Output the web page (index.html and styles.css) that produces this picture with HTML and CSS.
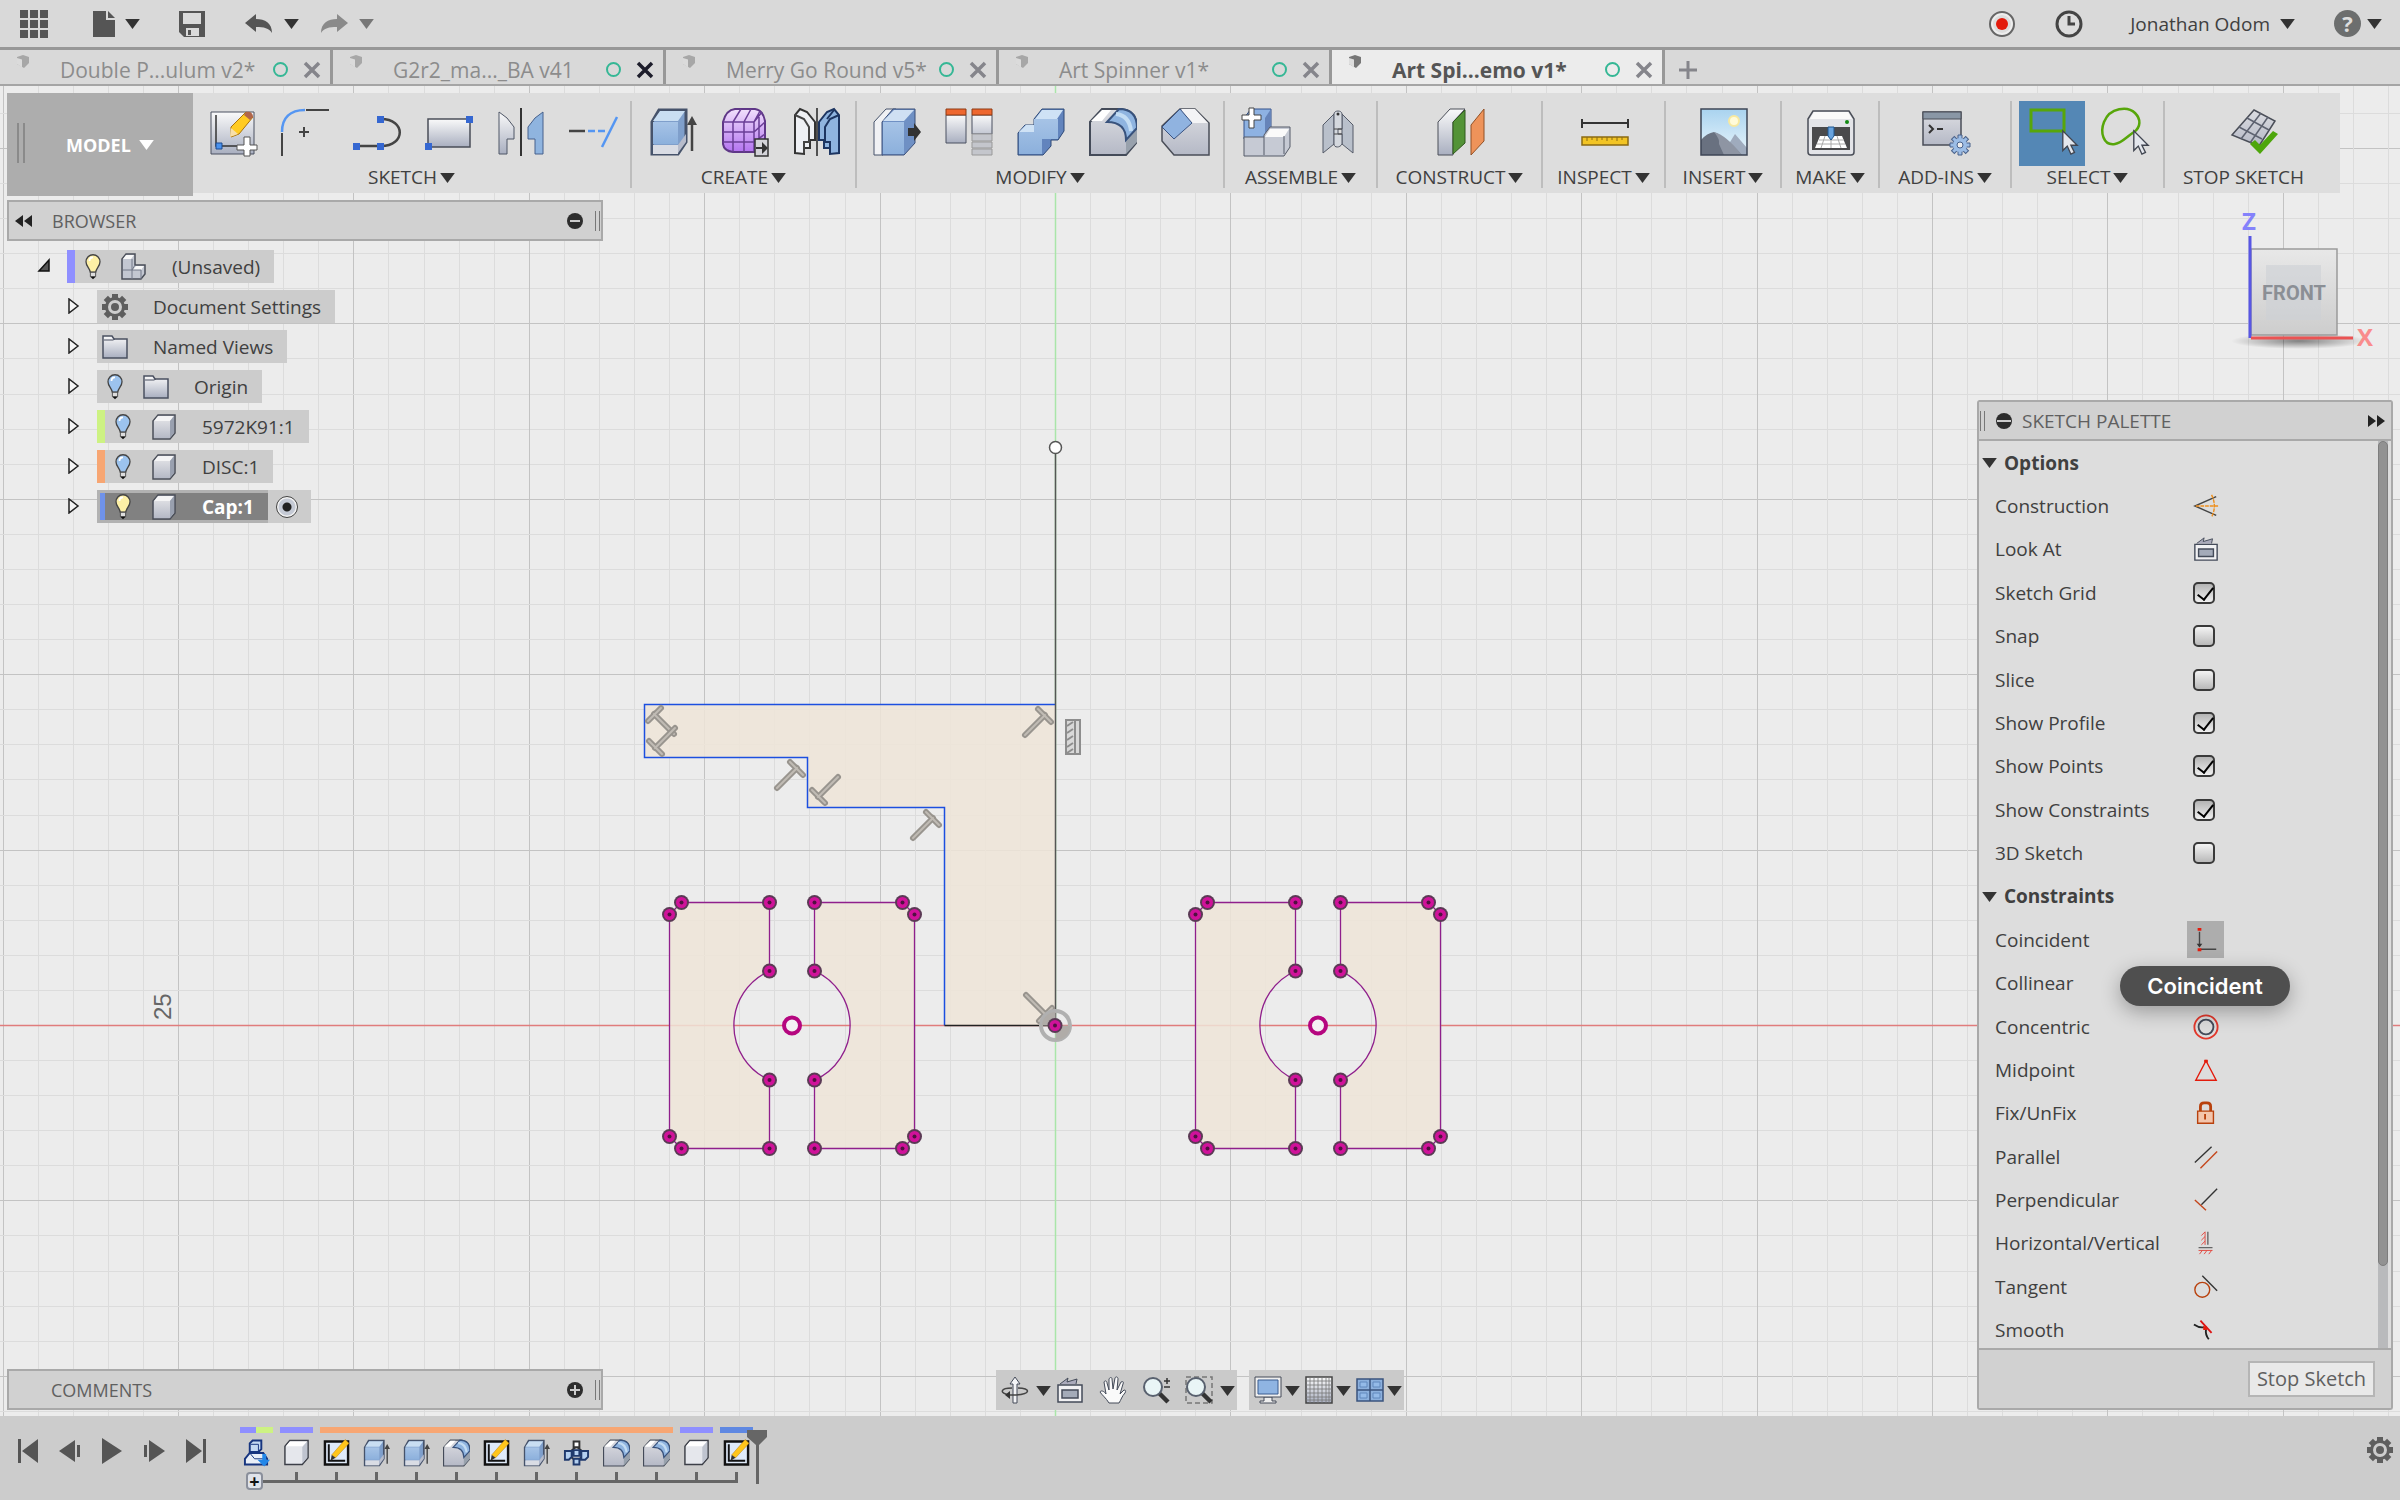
FILE: index.html
```html
<!DOCTYPE html>
<html lang="en">
  <head>
    <meta charset="utf-8">
    <title>Art Spinner Demo v1*</title>
    <link rel="stylesheet" href="styles.css">
  </head>
  <body>
    <!-- shared gradients and icons -->
    <svg class="defs" aria-hidden="true">
      <defs>
        <linearGradient id="steel" x1="0" y1="0" x2="0" y2="1"><stop offset="0" stop-color="#fafafa"/><stop offset="1" stop-color="#a9afc0"/></linearGradient>
        <linearGradient id="gray" x1="0" y1="0" x2="0" y2="1"><stop offset="0" stop-color="#dcdde2"/><stop offset="1" stop-color="#b5b9c6"/></linearGradient>
        <linearGradient id="blue" x1="0" y1="0" x2="0" y2="1"><stop offset="0" stop-color="#a6c3e6"/><stop offset="1" stop-color="#8cb0dc"/></linearGradient>
        <linearGradient id="purple" x1="0" y1="0" x2="0" y2="1"><stop offset="0" stop-color="#f1e0fb"/><stop offset="1" stop-color="#b373f0"/></linearGradient>
        <linearGradient id="sky" x1="0" y1="0" x2="0" y2="1"><stop offset="0" stop-color="#a9d3ef"/><stop offset="1" stop-color="#eaf6fc"/></linearGradient>
        <linearGradient id="cubeface" x1="0" y1="0" x2="0" y2="1"><stop offset="0" stop-color="#e8e8e8"/><stop offset="1" stop-color="#cdcdcd"/></linearGradient>
        <radialGradient id="shade"><stop offset="0" stop-color="#000" stop-opacity=".45"/><stop offset="1" stop-color="#000" stop-opacity="0"/></radialGradient>
        <symbol id="i-down" viewBox="0 0 16 12"><path d="M0 1h16L8 12z" fill="currentColor"/></symbol>
        <symbol id="i-doc" viewBox="0 0 14 14"><path d="M1 2l6-2 6 2v6l-5 5-7-4z" fill="#777"/><path d="M1 3l5 1.500v8L1 9z" fill="#ddd"/></symbol>
        <symbol id="i-x" viewBox="0 0 18 18"><path d="M2 2l14 14M16 2L2 16" stroke="currentColor" stroke-width="3.500"/></symbol>
        <symbol id="i-gear" viewBox="0 0 28 28">
          <g fill="currentColor"><circle cx="14" cy="14" r="10"/>
          <path d="M11 1h6v26h-6z"/><path d="M11 1h6v26h-6z" transform="rotate(45 14 14)"/><path d="M11 1h6v26h-6z" transform="rotate(90 14 14)"/><path d="M11 1h6v26h-6z" transform="rotate(135 14 14)"/></g>
          <circle cx="14" cy="14" r="5.500" fill="currentColor" stroke="#cdcdcd" stroke-width="3"/>
        </symbol>
        <symbol id="i-bulb" viewBox="0 0 28 32">
          <path d="M14 2c-5 0-8 4-8 8 0 5 4 7 5 12h6c1-5 5-7 5-12 0-4-3-8-8-8z" fill="currentColor" stroke="#444" stroke-width="1.500"/>
          <path d="M10 9c0-3 2-4 4-4" stroke="#fff" stroke-width="2" fill="none"/>
          <path d="M11 22h6v5h-6z" fill="#ddd" stroke="#444"/><path d="M11 27h6l-3 3z" fill="#111"/>
        </symbol>
        <symbol id="i-folder" viewBox="0 0 28 28"><path d="M2 25V3h9l2 3h13v19z" fill="url(#steel)" stroke="#4a5060" stroke-width="1.500"/><path d="M3 7h9l2-1" stroke="#4a5060" fill="none"/></symbol>
        <symbol id="i-cube" viewBox="0 0 28 28"><path d="M3 26V8l5-6h17v18l-5 6z" fill="#c3c7d1" stroke="#4a4e58" stroke-width="1.500"/><path d="M4 8l4-5h16l-4 5z" fill="#f4f4f5"/><path d="M20 8l4-5v17l-4 5z" fill="#99a0af"/><path d="M4 8h16v17H4z" fill="url(#gray)"/></symbol>
        <symbol id="i-comp" viewBox="0 0 28 28"><path d="M2 26V6l4-5h9v11h10v9l-4 5z" fill="#c3c7d1" stroke="#4a4e58" stroke-width="1.500"/><path d="M3 6l3-4h8l-3 4zM13 17l3-4h8l-3 4z" fill="#f8f8f8"/><path d="M12 6v20M3 17h18v9M12 17l3-5" fill="none" stroke="#737988"/></symbol>
        <symbol id="i-camera" viewBox="0 0 28 28"><path d="M4 8l8-6-1 4 10-3-1 5" fill="#aab" stroke="#444b59"/><path d="M2 9h24v17H2z" fill="#f1f1f3" stroke="#444b59" stroke-width="1.500"/><path d="M6 14h16v8H6z" fill="#a4abb9" stroke="#444b59" stroke-width="1.500"/></symbol>
        <symbol id="i-extrude" viewBox="0 0 48 48"><path d="M3 46V14L10 2h27v32l-8 12z" fill="#7f9fcb" stroke="#46536b" stroke-width="3"/><path d="M4 13L11 3h25l-7 10z" fill="#c9def2"/><path d="M4 14h25v22H4z" fill="url(#blue)"/><path d="M4 37h25v9H4z" fill="#d9dce4"/><path d="M29 37l8-11v8l-8 11z" fill="#b7bccb"/><path d="M43 43V14" stroke="#444" stroke-width="2.500"/><path d="M38 17l5-9 5 9z" fill="#444"/></symbol>
        <symbol id="i-round" viewBox="0 0 48 48"><path d="M1 47V14L13 1h20c11 1 15 9 15 19v14L37 47z" fill="url(#gray)" stroke="#444b59" stroke-width="2"/><path d="M2 13L13 2h9L13 13z" fill="#fff"/><path d="M37 31l11-12v15L37 46z" fill="#98a1ac"/><path d="M18 14L30 1c13 0 18 8 18 19L37 32c0-11-6-18-19-18z" fill="#8fb4e0" stroke="#38527c" stroke-width="2"/><path d="M27 6c10 1 14 8 15 17" fill="none" stroke="#c3dcf3" stroke-width="4"/></symbol>
        <symbol id="i-sketch" viewBox="0 0 28 28"><path d="M2 2h24v24H2z" fill="#dfeaf9" stroke="#111" stroke-width="2.500"/><path d="M6 5v17h17" fill="none" stroke="#111" stroke-width="2"/><path d="M9 16L23 0l4 4-14 15z" fill="#ffc61b" stroke="#bb7b00" stroke-width=".5"/><path d="M9 16l-1 6 5-3z" fill="#333"/></symbol>
        <symbol id="i-body" viewBox="0 0 28 28"><path d="M2 26V7l5-6h19v18l-6 7z" fill="#e5e7ec" stroke="#3c3f48" stroke-width="1.500"/><path d="M3 7l4-5h18l-5 5z" fill="#fff"/><path d="M20 8l5-6v17l-5 6z" fill="#bfc4cf"/></symbol>
        <symbol id="i-cursor" viewBox="0 0 20 28"><path d="M2 1v22l5-5 4 9 4-2-4-8h7z" fill="#e4e7ed" stroke="#404550" stroke-width="1.500"/></symbol>
      </defs>
    </svg>

    <header class="topbar">
      <div class="quick">
        <button class="flat apps" aria-label="Data panel"><svg width="28" height="28" viewBox="0 0 28 28"><path d="M0 0h8v8H0zM10 0h8v8h-8zM20 0h8v8h-8zM0 10h8v8H0zM10 10h8v8h-8zM20 10h8v8h-8zM0 20h8v8H0zM10 20h8v8h-8zM20 20h8v8h-8z" fill="#555"/></svg></button>
        <button class="flat file" aria-label="File"><svg width="22" height="26" viewBox="0 0 22 26"><path d="M0 0h13v9h9v17H0z" fill="#555"/><path d="M15 0l7 7h-7z" fill="#555"/></svg><svg class="down"><use href="#i-down"/></svg></button>
        <button class="flat save" aria-label="Save"><svg width="28" height="28" viewBox="0 0 28 28"><path d="M1 1h26v26H6l-5-5z" fill="#555"/><path d="M5 3h18v11H5zM8 18h13v8H8z" fill="#dadada"/><path d="M10 20h3v5h-3z" fill="#555"/></svg></button>
        <button class="flat undo" aria-label="Undo"><svg width="28" height="20" viewBox="0 0 28 20"><path d="M0 9l11-9v5c9 0 16 4 16 14-3-5-8-6-16-6v5z" fill="#555"/></svg><svg class="down"><use href="#i-down"/></svg></button>
        <button class="flat redo" aria-label="Redo"><svg width="28" height="20" viewBox="0 0 28 20"><path d="M28 9L17 0v5C8 5 1 9 1 19c3-5 8-6 16-6v5z" fill="#8a8a8a"/></svg><svg class="down"><use href="#i-down"/></svg></button>
      </div>
      <div class="account">
        <button class="flat" aria-label="Record"><svg width="28" height="28" viewBox="0 0 28 28"><circle cx="14" cy="14" r="12" fill="#eee" stroke="#666" stroke-width="2"/><circle cx="14" cy="14" r="9" fill="#ddd"/><circle cx="14" cy="14" r="6" fill="#e31b0c"/></svg></button>
        <button class="flat" aria-label="Job status"><svg width="28" height="28" viewBox="0 0 28 28"><circle cx="14" cy="14" r="12" fill="#ddd" stroke="#444" stroke-width="3"/><path d="M14 6v8h6" fill="none" stroke="#444" stroke-width="3"/></svg></button>
        <button class="flat user">Jonathan Odom <svg class="down"><use href="#i-down"/></svg></button>
        <button class="flat help" aria-label="Help"><span class="help-mark">?</span><svg class="down"><use href="#i-down"/></svg></button>
      </div>
    </header>

    <nav class="tabs">
      <div class="tab"><svg class="doc"><use href="#i-doc"/></svg><a href="#">Double P...ulum v2*</a><i></i><button class="flat" aria-label="Close"><svg><use href="#i-x"/></svg></button></div>
      <div class="tab"><svg class="doc"><use href="#i-doc"/></svg><a href="#">G2r2_ma..._BA v41</a><i></i><button class="flat dark" aria-label="Close"><svg><use href="#i-x"/></svg></button></div>
      <div class="tab"><svg class="doc"><use href="#i-doc"/></svg><a href="#">Merry Go Round v5*</a><i></i><button class="flat" aria-label="Close"><svg><use href="#i-x"/></svg></button></div>
      <div class="tab"><svg class="doc"><use href="#i-doc"/></svg><a href="#">Art Spinner v1*</a><i></i><button class="flat" aria-label="Close"><svg><use href="#i-x"/></svg></button></div>
      <div class="tab active"><svg class="doc"><use href="#i-doc"/></svg><a href="#">Art Spi...emo v1*</a><i></i><button class="flat" aria-label="Close"><svg><use href="#i-x"/></svg></button></div>
      <button class="flat new-tab" aria-label="New design"><svg width="20" height="20" viewBox="0 0 20 20"><path d="M10 1v18M1 10h18" stroke="#85858b" stroke-width="3"/></svg></button>
    </nav>

    <main class="workspace">
      <svg class="canvas" role="img" aria-label="Sketch canvas">
        <svg x="44%" y="940" class="origin">
          <g id="grid"></g>
          <path d="M-3000-.5h6000" stroke="#e07c7c" stroke-width="1.500"/>
          <path d="M-.5-1000v2000" stroke="#a9e5a9" stroke-width="1.500"/>
          <text class="ruler" transform="translate(-885 -6) rotate(-90)">25</text>

          <path d="M-411.500-321.500H-.5V-.5H-111.500V-218.500H-248.500V-268.500H-411.500z" fill="#efe5d8" fill-opacity=".85"/>
          <path d="M-.5-321.500H-411.500V-268.500H-248.500V-218.500H-111.500V-.5" fill="none" stroke="#1c4fe0" stroke-width="1.500"/>
          <path d="M-111.500-.5H-.5" stroke="#222" stroke-width="1.500"/>
          <path d="M-.5-572V-.5" stroke="#555" stroke-width="1.500"/>
          <circle cx="-.5" cy="-578.500" r="6" fill="#fff" stroke="#555" stroke-width="1.500"/>

          <defs>
            <g id="dot"><circle r="7.500" fill="#5b3a55"/><circle r="5.500" fill="#d0129a"/><circle r="2" fill="#501040"/></g>
            <g id="half">
              <path d="M-22.500-123H-110.500L-122.500-111V111L-110.500 123H-22.500V54.500A59.500 59.500 0 0 1-22.500-54.500z" fill="#efe5d8" fill-opacity=".85" stroke="#8f1f8c" stroke-width="1.300"/>
              <use href="#dot" x="-22.500" y="-123"/><use href="#dot" x="-110.500" y="-123"/><use href="#dot" x="-122.500" y="-111"/>
              <use href="#dot" x="-22.500" y="-54.500"/><use href="#dot" x="-22.500" y="54.500"/>
              <use href="#dot" x="-22.500" y="123"/><use href="#dot" x="-110.500" y="123"/><use href="#dot" x="-122.500" y="111"/>
            </g>
            <g id="bearing"><use href="#half"/><use href="#half" transform="scale(-1 1)"/><circle r="8" fill="#f4f0f3" stroke="#b5067f" stroke-width="4"/></g>
            <g id="perp" fill="none" stroke-linecap="round"><path d="M-12 12L8-8M1-14L14-1" stroke="#98948e" stroke-width="6"/><path d="M-12 12L8-8M1-14L14-1" stroke="#c0bbb4" stroke-width="2"/></g>
          </defs>
          <use href="#bearing" x="-264" y="-.5"/>
          <use href="#bearing" x="262" y="-.5"/>

          <use href="#perp" transform="translate(-19 -303)"/>
          <use href="#perp" transform="translate(-267 -250)"/>
          <use href="#perp" transform="translate(-131 -200)"/>
          <use href="#perp" transform="translate(-230 -237) rotate(180)"/>
          <use href="#perp" transform="translate(-394 -304) rotate(-90)"/>
          <use href="#perp" transform="translate(-393 -286) rotate(180)"/>
          <use href="#perp" transform="translate(-18 -19) rotate(90)"/>
          <path d="M10-306h14v34H10zM19-306v34M11-300l6-4M11-293l6-4M11-286l6-4M11-279l6-4M11-273l6-4" fill="#d8d8d8" stroke="#8d8d8d" stroke-width="2"/>
          <circle cx="-.5" cy="-.5" r="14.500" fill="none" stroke="#b0b0b0" stroke-width="4"/>
          <path d="M-.5-.5V-14A14 14 0 0 0-14-.5zM-.5-.5V14A14 14 0 0 0 14-.5z" fill="#b0aca8"/>
          <use href="#dot" x="-1" y="-.5"/>
        </svg>
      </svg>

      <div class="toolbar">
        <button class="model">MODEL <svg class="down"><use href="#i-down"/></svg></button>
        <section class="group">
          <div class="tools">
            <button class="tool" aria-label="Create sketch"><svg viewBox="0 0 48 48"><path d="M2 4h43v42H2z" fill="url(#steel)" stroke="#4a5060"/><path d="M7 7v31h30" fill="none" stroke="#333" stroke-width="1.500"/><path d="M7 35h6v6H7z" fill="#4a92ee" stroke="#1d4b90"/><path d="M22 19L37 4l7 5-14 17-8 3z" fill="#ffcb22" stroke="#a9720b"/><path d="M37 4c4-1 7 1 7 5l-3 3-6-5z" fill="#b0664b"/><path d="M22 20l-1 9 8-3z" fill="#f7dfa9"/><path d="M35 29h6v8h7v5h-7v6h-6v-6h-7v-5h7z" fill="#fff" stroke="#555"/></svg></button>
            <button class="tool" aria-label="Fillet"><svg viewBox="0 0 48 48"><path d="M1 24C1 10 9 2 24 2" fill="none" stroke="#5596f2" stroke-width="2.500"/><path d="M25 2h23M1 25v23M18 24h10M23 19v10" stroke="#444" stroke-width="2"/></svg></button>
            <button class="tool" aria-label="Line"><svg viewBox="0 0 48 48"><path d="M3 38h25c25 0 25-27 0-27" fill="none" stroke="#444" stroke-width="2.500"/><path d="M0 35h7v7H0zM24 35h7v7h-7zM24 8h7v7h-7z" fill="#3567d1"/></svg></button>
            <button class="tool" aria-label="Rectangle"><svg viewBox="0 0 48 48"><path d="M3 11h42v28H3z" fill="url(#steel)" stroke="#4a4e58" stroke-width="1.500"/><path d="M41 8h7v7h-7zM0 35h7v7H0z" fill="#3567d1"/></svg></button>
            <button class="tool" aria-label="Mirror"><svg viewBox="0 0 48 48"><path d="M2 46V4l8 6 7 9v12h-7v15z" fill="url(#steel)" stroke="#4f5666"/><path d="M46 46V4l-8 6-7 9v12h7v15z" fill="#8fb4df" stroke="#46618c"/><path d="M24 0v48" stroke="#333" stroke-width="2"/></svg></button>
            <button class="tool" aria-label="Trim"><svg viewBox="0 0 48 48"><path d="M0 23h16" stroke="#444" stroke-width="2.500"/><path d="M19 23h17" stroke="#5596f2" stroke-width="2.500" stroke-dasharray="7 3"/><path d="M33 39L48 9" stroke="#5596f2" stroke-width="2.500"/></svg></button>
          </div>
          <a href="#" class="menu">SKETCH<svg class="down"><use href="#i-down"/></svg></a>
        </section>
        <section class="group">
          <div class="tools">
            <button class="tool" aria-label="Extrude"><svg><use href="#i-extrude"/></svg></button>
            <button class="tool" aria-label="Create form"><svg viewBox="0 0 48 48"><path d="M2 14Q5 2 14 1h20q8 1 10 12v22q-2 8-10 9H12Q3 43 2 36z" fill="url(#purple)" stroke="#5f3787" stroke-width="2"/><path d="M2 24h31l11-10M2 14h31l8-10M2 34h31l11-8M12 44V14L20 1M23 44V14L30 1M33 43V14L39 3M38 42V9" fill="none" stroke="#6a3e96" stroke-width="1.500"/><path d="M34 31h13v17H34z" fill="#d3d3d8" stroke="#333" stroke-width="1.500"/><path d="M35 39h6v-5l6 6-6 6v-5h-6z" fill="#333"/></svg></button>
            <button class="tool" aria-label="Pattern mirror"><svg viewBox="0 0 48 48"><path d="M2 45V7l5-6 7 3 8 10v18h-5v8h-6v6z" fill="#eef0f4" stroke="#333" stroke-width="2"/><path d="M2 7l9 4 5 8v15h-5v11" fill="none" stroke="#444" stroke-width="2"/><path d="M46 45V7l-5-6-7 3-8 10v18h5v8h6v6z" fill="#8fb4df" stroke="#1d3561" stroke-width="2"/><path d="M46 7l-9 4-5 8v15h5v11M34 11l7-9" fill="none" stroke="#1d3561" stroke-width="2"/><path d="M24 0v48" stroke="#222" stroke-width="1.500"/></svg></button>
          </div>
          <a href="#" class="menu">CREATE<svg class="down"><use href="#i-down"/></svg></a>
        </section>
        <section class="group">
          <div class="tools">
            <button class="tool" aria-label="Press pull"><svg viewBox="0 0 48 48"><path d="M1 47V14L13 1h10L10 14v33z" fill="#f0f1f4" stroke="#46536b"/><path d="M9 47V14L20 1h22v34L31 47z" fill="#6f90c4" stroke="#3b4f78"/><path d="M10 13L21 2h20L31 13z" fill="#cfe0f3"/><path d="M10 14h21v32H10z" fill="url(#blue)"/><path d="M35 20h6v-5l7 9-7 9v-5h-6z" fill="#333"/></svg></button>
            <button class="tool" aria-label="Model"><svg viewBox="0 0 48 48"><path d="M1 7h20v28H1zM27 7h20v19H27z" fill="url(#steel)" stroke="#4a5060"/><path d="M1 1h20v6H1zM27 1h20v6H27z" fill="#ee672f" stroke="#8c3a14"/><path d="M27 26h20v7H27zM27 34h20v6H27zM27 41h20v6H27z" fill="#c4c6cc" stroke="#999"/></svg></button>
            <button class="tool" aria-label="Combine"><svg viewBox="0 0 48 48"><path d="M1 47V25l7-8h9V11l8-10h22v22l-6 9h-7v6l-8 9z" fill="#6284bd" stroke="#2d4876"/><path d="M2 24l7-7h8v-6h24v20H25v15H2z" fill="url(#blue)"/><path d="M18 11l7-9h21l-6 9zM2 24l7-7h8v7z" fill="#cfe2f5"/></svg></button>
            <button class="tool" aria-label="Fillet edge"><svg><use href="#i-round"/></svg></button>
            <button class="tool" aria-label="Chamfer"><svg viewBox="0 0 48 48"><path d="M1 18L19 1h15l14 14v32H13L1 33z" fill="url(#gray)" stroke="#4a4e58" stroke-width="1.500"/><path d="M20 1h14l13 14H31z" fill="#f4f4f6"/><path d="M1 19L19 1l12 14-18 16z" fill="#90b3e0" stroke="#3a5382"/></svg></button>
          </div>
          <a href="#" class="menu">MODIFY<svg class="down"><use href="#i-down"/></svg></a>
        </section>
        <section class="group">
          <div class="tools">
            <button class="tool" aria-label="New component"><svg viewBox="0 0 48 48"><path d="M2 31V10L9 1h20v20l-6 10z" fill="#8eb2e2" stroke="#33508a"/><path d="M23 10l6-9v20l-6 9z" fill="#6684b9"/><path d="M2 29h20V27l6-8h20v20l-6 9H2z" fill="#c6cad4" stroke="#555b68"/><path d="M23 29l5-8h19l-5 8z" fill="#fafafa"/><path d="M22 29v18M42 28v18" stroke="#555b68"/><path d="M7 0h5v7h7v5h-7v8H7v-8H0V7h7z" fill="#fff" stroke="#444"/></svg></button>
            <button class="tool" aria-label="Joint"><svg viewBox="0 0 48 48"><path d="M9 45V17L20 6v30zM39 45V17L28 6v30z" fill="#b9c0cb" stroke="#555b68"/><path d="M20 6c0-4 8-4 8 0v15h-4v5h4v10c-2 4-8 4-8 0z" fill="#d4d8de" stroke="#555b68"/><path d="M20 21h8M20 26h8" stroke="#444"/><circle cx="24" cy="6" r="1.500" fill="#333"/></svg></button>
          </div>
          <a href="#" class="menu">ASSEMBLE<svg class="down"><use href="#i-down"/></svg></a>
        </section>
        <section class="group">
          <div class="tools">
            <button class="tool" aria-label="Construct plane"><svg viewBox="0 0 48 48"><path d="M1 47V14L13 1h15L16 14v33z" fill="url(#steel)" stroke="#4a4e58"/><path d="M16 14L28 2v33L16 46z" fill="#539337" stroke="#31581f"/><path d="M34 17L47 1v32L34 47z" fill="#ee935a" stroke="#915126"/></svg></button>
          </div>
          <a href="#" class="menu">CONSTRUCT<svg class="down"><use href="#i-down"/></svg></a>
        </section>
        <section class="group">
          <div class="tools">
            <button class="tool" aria-label="Measure"><svg viewBox="0 0 48 48"><path d="M1 15h46M1 11v9M47 11v9" stroke="#333" stroke-width="2"/><path d="M1 29h46v8H1z" fill="#f2c424" stroke="#8a6a12" stroke-width="1.500"/><path d="M6 29v4M11 29v3M16 29v4M21 29v3M26 29v4M31 29v3M36 29v4M41 29v3" stroke="#8a6a12"/></svg></button>
          </div>
          <a href="#" class="menu">INSPECT<svg class="down"><use href="#i-down"/></svg></a>
        </section>
        <section class="group">
          <div class="tools">
            <button class="tool" aria-label="Insert canvas"><svg viewBox="0 0 48 48"><path d="M1 1h46v46H1z" fill="url(#sky)"/><circle cx="34" cy="13" r="5" fill="#fffbd9" stroke="#f7e9a0" stroke-width="2"/><path d="M22 47l13-21 12 14v7z" fill="#9fabbd"/><path d="M1 32q6-7 13-8 10 4 28 23H1z" fill="#697180"/><path d="M14 24q6 7 5 12l5 11h18Q26 27 14 24z" fill="#8e95a3"/><path d="M1 1h46v46H1z" fill="none" stroke="#3e4655" stroke-width="1.500"/></svg></button>
          </div>
          <a href="#" class="menu">INSERT<svg class="down"><use href="#i-down"/></svg></a>
        </section>
        <section class="group">
          <div class="tools">
            <button class="tool" aria-label="3D print"><svg viewBox="0 0 48 48"><path d="M1 11l5-8h36l5 8v33q0 3-3 3H4q-3 0-3-3z" fill="#e3e4e8" stroke="#4a4e58" stroke-width="1.500"/><path d="M3 11l4-7h34l4 7z" fill="#fafafa"/><circle cx="40" cy="14" r="2" fill="#128a12"/><path d="M5 19h38v23H5z" fill="#4a4a4c"/><path d="M13 28h22l5 12H8z" fill="#fff"/><path d="M12 32h25M10 36h28M18 28l-4 12M30 28l4 12M24 30v10" stroke="#aaa"/><path d="M21 19h6v9l-3 4-3-4z" fill="#67a2de" stroke="#1f568f"/></svg></button>
          </div>
          <a href="#" class="menu">MAKE<svg class="down"><use href="#i-down"/></svg></a>
        </section>
        <section class="group">
          <div class="tools">
            <button class="tool" aria-label="Scripts"><svg viewBox="0 0 48 48"><path d="M1 4h38v33H1z" fill="url(#gray)" stroke="#4a4e58" stroke-width="1.500"/><path d="M1 4h38v7H1z" fill="#8a97a6" stroke="#4a4e58"/><path d="M7 17l4 4-4 4M15 21h6" fill="none" stroke="#333" stroke-width="2"/><g stroke="#49618a" fill="#9cbde6"><path d="M36 27h4v20h-4z"/><path d="M36 27h4v20h-4z" transform="rotate(45 38 37)"/><path d="M36 27h4v20h-4z" transform="rotate(90 38 37)"/><path d="M36 27h4v20h-4z" transform="rotate(135 38 37)"/></g><circle cx="38" cy="37" r="7" fill="#9cbde6"/><circle cx="38" cy="37" r="3" fill="#eee" stroke="#49618a"/></svg></button>
          </div>
          <a href="#" class="menu">ADD-INS<svg class="down"><use href="#i-down"/></svg></a>
        </section>
        <section class="group">
          <div class="tools">
            <button class="tool selected" aria-label="Window select"><svg viewBox="0 0 48 48"><path d="M2 2h33v21H2z" fill="none" stroke="#57a60a" stroke-width="3"/><use href="#i-cursor" x="32" y="21" width="18" height="27"/></svg></button>
            <button class="tool" aria-label="Free form select"><svg viewBox="0 0 48 48"><path d="M14 36C2 38-1 24 3 14 9-1 27-2 34 5c6 6 6 14-1 19-9 6-12 11-19 12z" fill="none" stroke="#57a60a" stroke-width="2.500"/><use href="#i-cursor" x="31" y="21" width="18" height="27"/></svg></button>
          </div>
          <a href="#" class="menu">SELECT<svg class="down"><use href="#i-down"/></svg></a>
        </section>
        <section class="group">
          <div class="tools">
            <button class="tool" aria-label="Stop sketch"><svg viewBox="0 0 48 48"><path d="M24 2l21 11-16 25L2 27z" fill="url(#gray)" stroke="#4a4e58" stroke-width="1.500"/><path d="M31 5L11 31M38 9L20 35M17 10l22 12M9 19l23 12" stroke="#5d6270" stroke-width="1.500"/><path d="M20 36l5-4 5 5 13-14 5 3-18 20z" fill="#4ea60c"/></svg></button>
          </div>
          <a href="#" class="menu stop-sketch">STOP SKETCH</a>
        </section>
      </div>

      <div class="panels">
        <div class="left">
          <aside>
            <div class="panel-head">
              <svg width="17" height="14" viewBox="0 0 17 14"><path d="M8 1v12L0 7zM17 1v12L9 7z" fill="#222"/></svg>
              <h2>BROWSER</h2>
              <button class="round" aria-label="Collapse browser"><svg viewBox="0 0 16 16"><circle cx="8" cy="8" r="8" fill="#2d2d2d"/><path d="M3 8h10" stroke="#ccc" stroke-width="2"/></svg></button>
              <span class="grip"></span>
            </div>
            <ul class="tree">
              <li class="node">
                <button class="toggle" aria-label="Collapse"><svg viewBox="0 0 14 16"><path d="M2 13h10V2z" fill="#555" stroke="#111" stroke-width="1.500"/></svg></button>
                <div class="pill"><b class="violet"></b><svg class="lit"><use href="#i-bulb"/></svg><svg><use href="#i-comp"/></svg><span>(Unsaved)</span></div>
              </li>
              <li class="node child">
                <button class="toggle" aria-label="Expand"><svg viewBox="0 0 14 16"><path d="M2 1v14l9-7z"/></svg></button>
                <div class="pill"><svg><use href="#i-gear"/></svg><span>Document Settings</span></div>
              </li>
              <li class="node child">
                <button class="toggle" aria-label="Expand"><svg viewBox="0 0 14 16"><path d="M2 1v14l9-7z"/></svg></button>
                <div class="pill"><svg><use href="#i-folder"/></svg><span>Named Views</span></div>
              </li>
              <li class="node child">
                <button class="toggle" aria-label="Expand"><svg viewBox="0 0 14 16"><path d="M2 1v14l9-7z"/></svg></button>
                <div class="pill"><svg class="off"><use href="#i-bulb"/></svg><svg><use href="#i-folder"/></svg><span>Origin</span></div>
              </li>
              <li class="node child">
                <button class="toggle" aria-label="Expand"><svg viewBox="0 0 14 16"><path d="M2 1v14l9-7z"/></svg></button>
                <div class="pill"><b class="lime"></b><svg class="off"><use href="#i-bulb"/></svg><svg><use href="#i-cube"/></svg><span>5972K91:1</span></div>
              </li>
              <li class="node child">
                <button class="toggle" aria-label="Expand"><svg viewBox="0 0 14 16"><path d="M2 1v14l9-7z"/></svg></button>
                <div class="pill"><b class="orange"></b><svg class="off"><use href="#i-bulb"/></svg><svg><use href="#i-cube"/></svg><span>DISC:1</span></div>
              </li>
              <li class="node child">
                <button class="toggle" aria-label="Expand"><svg viewBox="0 0 14 16"><path d="M2 1v14l9-7z"/></svg></button>
                <div class="pill current"><b class="azure"></b><svg class="lit"><use href="#i-bulb"/></svg><svg><use href="#i-cube"/></svg><span>Cap:1</span></div>
                <label class="activate"><input type="radio" name="component" checked aria-label="Activate Cap:1"></label>
              </li>
            </ul>
          </aside>
          <div class="panel-head">
            <h2 class="indent">COMMENTS</h2>
            <button class="round" aria-label="Expand comments"><svg viewBox="0 0 16 16"><circle cx="8" cy="8" r="8" fill="#2d2d2d"/><path d="M3 8h10M8 3v10" stroke="#ccc" stroke-width="2"/></svg></button>
            <span class="grip"></span>
          </div>
        </div>

        <div class="navbars">
          <div class="navbar view">
            <button class="flat" aria-label="Orbit"><svg viewBox="0 0 28 28"><path d="M12 27V8H9l5-7 5 7h-3v19z" fill="#f4f4f6" stroke="#444b59"/><path d="M9 19C-3 17 0 12 11 12M17 12c13 0 13 6-2 7H8" fill="none" stroke="#444" stroke-width="1.500"/><path d="M9 15v8l-5-4z" fill="#333"/></svg></button>
            <button class="flat drop" aria-label="Orbit options"><svg class="down"><use href="#i-down"/></svg></button>
            <button class="flat" aria-label="Look at"><svg><use href="#i-camera"/></svg></button>
            <button class="flat wide" aria-label="Pan"><svg viewBox="0 0 28 28"><path d="M10 27c-3-5-7-8-9-11 1-2 4-1 6 2L5 6c1-2 3-1 3 1l2 7V3c1-2 3-2 3 0l1 10 2-11c1-2 3-1 3 1l-1 11 4-8c2-1 3 0 2 2l-3 10 4-4c2 0 2 1 1 3-3 3-4 7-6 10z" fill="#fafafa" stroke="#444b59"/></svg></button>
            <button class="flat wide" aria-label="Zoom"><svg viewBox="0 0 28 28"><path d="M17 17l9 9" stroke="#333" stroke-width="4.500"/><circle cx="11" cy="11" r="9" fill="#e9f5f6" stroke="#59616f" stroke-width="2"/><path d="M22 5h6M25 2v6M22 11h6" stroke="#333" stroke-width="1.500"/></svg></button>
            <button class="flat wide" aria-label="Zoom window"><svg viewBox="0 0 28 28"><path d="M1 1h26v26H1z" fill="none" stroke="#777" stroke-width="1.500" stroke-dasharray="5 3"/><path d="M17 17l9 9" stroke="#333" stroke-width="4.500"/><circle cx="11" cy="11" r="9" fill="#e9f5f6" stroke="#59616f" stroke-width="2"/></svg></button>
            <button class="flat drop" aria-label="Zoom options"><svg class="down"><use href="#i-down"/></svg></button>
          </div>
          <div class="navbar">
            <button class="flat" aria-label="Display settings"><svg viewBox="0 0 28 28"><path d="M10 21h8v4h4v2H6v-2h4z" fill="#eee" stroke="#444b59"/><path d="M1 1h26v20H1z" fill="#eee" stroke="#444b59"/><path d="M4 4h20v14H4z" fill="#8fb4e2" stroke="#3b5c90"/></svg></button>
            <button class="flat drop" aria-label="Display options"><svg class="down"><use href="#i-down"/></svg></button>
            <button class="flat" aria-label="Grid and snaps"><svg viewBox="0 0 28 28"><path d="M1 1h26v26H1z" fill="url(#steel)" stroke="#444" stroke-width="1.500"/><path d="M5 1v26M9 1v26M13 1v26M17 1v26M21 1v26M1 5h26M1 9h26M1 13h26M1 17h26M1 21h26M24 1v26M1 24h26" stroke="#777" stroke-width=".8"/></svg></button>
            <button class="flat drop" aria-label="Grid options"><svg class="down"><use href="#i-down"/></svg></button>
            <button class="flat" aria-label="Viewports"><svg viewBox="0 0 28 28"><path d="M1 3h26v22H1zM14 3v22M1 14h26" fill="#8cb0dd" stroke="#3a537e" stroke-width="1.500"/><path d="M4 6h7v5H4zM17 6h7v5h-7zM4 17h7v5H4zM17 17h7v5h-7z" fill="#94bae8" stroke="#6088bd"/></svg></button>
            <button class="flat drop" aria-label="Viewport options"><svg class="down"><use href="#i-down"/></svg></button>
          </div>
        </div>

        <div class="right">
          <svg class="viewcube" viewBox="0 0 180 150" role="img" aria-label="View cube">
            <ellipse cx="86" cy="136" rx="68" ry="8" fill="url(#shade)"/>
            <path d="M38 44h86v86H38z" fill="url(#cubeface)" stroke="#9a9a9a" stroke-width="1.500"/>
            <path d="M53 60h55v55H53z" fill="#cdd0d6" fill-opacity=".6"/>
            <path d="M37 31v102" stroke="#5856e4" stroke-width="3"/>
            <path d="M38 133h102" stroke="#ea5353" stroke-width="3"/>
            <text class="face" x="81" y="95">FRONT</text>
            <text class="axis z" x="36" y="25">Z</text>
            <text class="axis x" x="152" y="141">X</text>
          </svg>

          <aside class="palette">
            <div class="palette-head">
              <span class="grip"></span>
              <button class="round" aria-label="Collapse palette"><svg viewBox="0 0 16 16"><circle cx="8" cy="8" r="8" fill="#2d2d2d"/><path d="M1 8h14" stroke="#ccc" stroke-width="2"/></svg></button>
              <h2>SKETCH PALETTE</h2>
              <svg width="17" height="14" viewBox="0 0 17 14"><path d="M0 1v12l8-6zM9 1v12l8-6z" fill="#222"/></svg>
            </div>
            <div class="palette-body">
              <div class="rows">
                <h3><svg class="down"><use href="#i-down"/></svg>Options</h3>
                <div class="row"><span id="construction">Construction</span><button aria-labelledby="construction"><svg viewBox="0 0 28 28"><path d="M25 4L2 14l23 10" fill="none" stroke="#444" stroke-width="1.500"/><path d="M3 14h24M20 2q6 12 0 24" fill="none" stroke="#ee8f1c" stroke-width="1.500" stroke-dasharray="4 1"/></svg></button></div>
                <div class="row"><span id="look">Look At</span><button aria-labelledby="look"><svg><use href="#i-camera"/></svg></button></div>
                <div class="row"><label for="sketch-grid">Sketch Grid</label><input type="checkbox" id="sketch-grid" checked></div>
                <div class="row"><label for="snap">Snap</label><input type="checkbox" id="snap"></div>
                <div class="row"><label for="slice">Slice</label><input type="checkbox" id="slice"></div>
                <div class="row"><label for="profile">Show Profile</label><input type="checkbox" id="profile" checked></div>
                <div class="row"><label for="points">Show Points</label><input type="checkbox" id="points" checked></div>
                <div class="row"><label for="constraints">Show Constraints</label><input type="checkbox" id="constraints" checked></div>
                <div class="row"><label for="sketch3d">3D Sketch</label><input type="checkbox" id="sketch3d"></div>
                <h3><svg class="down"><use href="#i-down"/></svg>Constraints</h3>
                <div class="row"><span id="coincident">Coincident</span><button class="hover" aria-labelledby="coincident"><svg viewBox="0 0 28 28"><path d="M7 5v16M8 24h17" stroke="#444" stroke-width="1.500"/><path d="M4 18h6l-3 4z" fill="#333"/><path d="M5 1h4v3H5zM5 23h4v3H5z" fill="#e31b0c"/></svg></button><div class="tooltip" role="tooltip">Coincident</div></div>
                <div class="row"><span id="collinear">Collinear</span><button aria-labelledby="collinear"></button></div>
                <div class="row"><span id="concentric">Concentric</span><button aria-labelledby="concentric"><svg viewBox="0 0 28 28"><circle cx="14" cy="14" r="12.500" fill="none" stroke="#e2382c" stroke-width="2"/><circle cx="14" cy="14" r="8" fill="none" stroke="#444b59" stroke-width="2"/></svg></button></div>
                <div class="row"><span id="midpoint">Midpoint</span><button aria-labelledby="midpoint"><svg viewBox="0 0 28 28"><path d="M14 4l11 21H3z" fill="none" stroke="#e31b0c" stroke-width="1.500"/><path d="M12 3h4v3h-4z" fill="#e31b0c"/></svg></button></div>
                <div class="row"><span id="fix">Fix/UnFix</span><button aria-labelledby="fix"><svg viewBox="0 0 28 28"><path d="M8 13V7q0-4 4-4h3q4 0 4 4v6" fill="none" stroke="#b8410d" stroke-width="3"/><path d="M5 12h17v13H5z" fill="#f3c5ac" stroke="#b8410d" stroke-width="1.500"/><path d="M13 15v6" stroke="#b8410d" stroke-width="2"/></svg></button></div>
                <div class="row"><span id="parallel">Parallel</span><button aria-labelledby="parallel"><svg viewBox="0 0 28 28"><path d="M2 20L20 3" stroke="#333" stroke-width="1.500"/><path d="M8 26L26 8" stroke="#c4451a" stroke-width="1.500"/></svg></button></div>
                <div class="row"><span id="perpendicular">Perpendicular</span><button aria-labelledby="perpendicular"><svg viewBox="0 0 28 28"><path d="M9 19L26 2" stroke="#333" stroke-width="1.500"/><path d="M2 14l12 11" stroke="#c4451a" stroke-width="1.500"/></svg></button></div>
                <div class="row"><span id="horizontal">Horizontal/Vertical</span><button aria-labelledby="horizontal"><svg viewBox="0 0 28 28"><path d="M16 2v14M6 19h15" stroke="#666" stroke-width="1.500"/><path d="M13 2v14M9 6l4-4M9 11l4-4M9 16l4-4M6 22h15M7 26l3-4M12 26l3-4M17 26l3-4" stroke="#e2453c"/></svg></button></div>
                <div class="row"><span id="tangent">Tangent</span><button aria-labelledby="tangent"><svg viewBox="0 0 28 28"><circle cx="10" cy="17" r="8" fill="none" stroke="#b8410d" stroke-width="1.500"/><path d="M10 2l16 16" stroke="#333" stroke-width="1.500"/></svg></button></div>
                <div class="row"><span id="smooth">Smooth</span><button aria-labelledby="smooth"><svg viewBox="0 0 28 28"><path d="M1 8q6 4 11 3M14 13q-1 6 3 11" fill="none" stroke="#222" stroke-width="2"/><path d="M8 4l12 13" stroke="#d11" stroke-width="2"/><path d="M11 10h4v4h-4z" fill="#e31b0c"/></svg></button></div>
              </div>
              <div class="scroll"><div class="thumb"></div></div>
            </div>
            <div class="palette-foot"><button class="stop">Stop Sketch</button></div>
          </aside>
        </div>
      </div>
    </main>

    <footer class="timeline">
      <div class="player">
        <button class="flat" aria-label="Go to start"><svg viewBox="0 0 22 26"><path d="M1 1h3v24H1zM21 1v24L5 13z"/></svg></button>
        <button class="flat" aria-label="Step back"><svg viewBox="0 0 22 26"><path d="M0 13L16 2v22zM18 7h3v12h-3z"/></svg></button>
        <button class="flat" aria-label="Play"><svg viewBox="0 0 22 26"><path d="M1 0l20 13L1 26z"/></svg></button>
        <button class="flat" aria-label="Step forward"><svg viewBox="0 0 22 26"><path d="M22 13L6 2v22zM1 7h3v12H1z"/></svg></button>
        <button class="flat" aria-label="Go to end"><svg viewBox="0 0 22 26"><path d="M18 1h3v24h-3zM1 1v24l16-12z"/></svg></button>
      </div>
      <div class="history">
        <div class="seg split"><svg viewBox="0 0 28 28"><path d="M2 26v-6l5-6h14l4 6v6z" fill="#e9eff8" stroke="#17357f" stroke-width="2"/><path d="M7 14l5 6h9" fill="none" stroke="#17357f"/><path d="M7 13V4l3-3h9v9l-3 3z" fill="#c3d8f2" stroke="#17357f" stroke-width="2"/><path d="M8 5h8v7" fill="none" stroke="#17357f"/><path d="M20 15h4v6h4l-6 7-7-7h5z" fill="#2387e8"/></svg></div>
        <div class="seg violet"><svg><use href="#i-body"/></svg></div>
        <div class="seg orange">
          <svg><use href="#i-sketch"/></svg><svg><use href="#i-extrude"/></svg><svg><use href="#i-extrude"/></svg><svg><use href="#i-round"/></svg><svg><use href="#i-sketch"/></svg><svg><use href="#i-extrude"/></svg>
          <svg viewBox="0 0 28 28"><path d="M14 7L5 15l9 8 9-8z" fill="none" stroke="#333" stroke-width="2"/><path d="M11 2h6v6h-6z" fill="#fff" stroke="#333" stroke-width="2"/><g fill="#b4d0f0" stroke="#203a6d" stroke-width="2"><path d="M2 12h7v6l-3 3H2zM19 12h7v6l-3 3h-4zM11 11h6v6h-6zM11 20h6v6h-6z"/></g></svg>
          <svg><use href="#i-round"/></svg><svg><use href="#i-round"/></svg>
        </div>
        <div class="seg violet"><svg><use href="#i-body"/></svg></div>
        <div class="seg azure"><svg><use href="#i-sketch"/></svg></div>
        <div class="track"><button class="expand" aria-label="Expand group">+</button><span></span><span></span><span></span><span></span><span></span><span></span><span></span><span></span><span></span><span></span><span></span><span></span></div>
        <svg class="playhead" viewBox="0 0 20 54"><path d="M0 0h20v7l-8 8v39H9V15L0 7z" fill="#666"/></svg>
      </div>
      <button class="flat settings" aria-label="Timeline settings"><svg><use href="#i-gear"/></svg></button>
    </footer>

    <script>
      // grid lines around the origin, every fifth one is a major line
      const step = 35.08;
      const grid = document.getElementById("grid");

      function addLine(i, d) {
        const line = document.createElementNS("http://www.w3.org/2000/svg", "path");
        line.setAttribute("d", d);
        line.setAttribute("class", i % 5 === 0 ? "major" : "minor");
        grid.appendChild(line);
      }

      for (let i = -60; i <= 60; i++) {
        const pos = Math.round(i * step) - 0.5;
        addLine(i, `M${pos}-1500V1500`);
        addLine(i, `M-3000 ${pos}H3000`);
      }
    </script>
  </body>
</html>
```

FILE: styles.css
```css
* {
  box-sizing: border-box;
}

body {
  display: flex;
  flex-direction: column;
  margin: 0;
  min-height: 100vh;
  background: #ececec;
  color: #404040;
  font-family: "Open Sans", "Noto Sans", sans-serif;
  font-size: 19px;
  line-height: 24px;
}

button {
  padding: 0;
  border: 0;
  background: none;
  color: inherit;
  font: inherit;
}

a {
  color: inherit;
  text-decoration: none;
}

h2,
h3 {
  margin: 0;
  font-size: 19px;
}

h2 {
  flex: 1;
  color: #606060;
  font-weight: 400;
}

.defs {
  position: absolute;
  width: 0;
  height: 0;
}

.flat {
  display: flex;
  align-items: center;
}

.down {
  width: 15px;
  height: 11px;
  color: #333;
}

/* top bar */
.topbar {
  display: flex;
  justify-content: space-between;
  align-items: center;
  height: 50px;
  padding: 0 18px 0 20px;
  border-bottom: 3px solid #989898;
  background: #d9d9d9;
}

.quick,
.account {
  display: flex;
  align-items: center;
}

.file {
  gap: 10px;
  margin-left: 45px;
}

.save {
  margin-left: 38px;
}

.undo,
.redo {
  gap: 11px;
}

.undo {
  margin-left: 39px;
}

.redo {
  margin-left: 21px;
}

.redo .down {
  color: #777;
}

.account {
  gap: 39px;
}

.user {
  gap: 10px;
  margin-left: 8px;
}

.help {
  gap: 6px;
}

.help-mark {
  width: 27px;
  height: 27px;
  border-radius: 50%;
  background: #6c6e6e;
  color: #ddd;
  font-size: 22px;
  font-weight: 700;
  line-height: 27px;
  text-align: center;
}

/* document tabs */
.tabs {
  display: flex;
  height: 36px;
  border-bottom: 2px solid #a5a5a5;
  background: #d9d9d9;
}

.tab {
  display: flex;
  align-items: center;
  width: 333px;
  padding: 5px 9px 0 16px;
  border-right: 3px solid #989898;
  color: #8c8c8c;
  font-size: 21px;
}

.tab .doc {
  align-self: flex-start;
  width: 14px;
  height: 14px;
  opacity: 0.5;
}

.tab a {
  flex: 1;
  margin-left: 30px;
}

.tab i {
  width: 15px;
  height: 15px;
  margin-right: 15px;
  border: 2px solid #35b795;
  border-radius: 50%;
}

.tab .flat {
  color: #85858b;
}

.tab .flat svg {
  width: 18px;
  height: 18px;
}

.tab .dark {
  color: #1d1d2b;
}

.active {
  background: #ececec;
  color: #555;
  font-weight: 700;
}

.active .doc {
  opacity: 1;
}

.new-tab {
  margin: 5px 0 0 13px;
}

/* workspace */
.workspace {
  position: relative;
  display: flex;
  flex: 1;
  flex-direction: column;
  padding: 7px 7px 6px;
}

.canvas {
  position: absolute;
  inset: 0;
  width: 100%;
  height: 100%;
}

.origin {
  overflow: visible;
}

.minor {
  stroke: #dcdcdc;
}

.major {
  stroke: #c3c3c3;
}

.ruler {
  fill: #666;
  font-family: "Liberation Sans", sans-serif;
  font-size: 24px;
}

.toolbar {
  position: relative;
  display: grid;
  grid-template-columns: 186px 439fr 225fr 368fr 153fr 165fr 123fr 116fr 98fr 132fr 153fr 175fr;
  height: 100px;
  margin-right: 53px;
  background: #dddddd;
}

.model {
  display: flex;
  align-items: center;
  gap: 8px;
  padding-left: 49px;
  border-left: 10px solid #adadad;
  background: linear-gradient(90deg, #8a8a8a 2px, transparent 2px 6px, #8a8a8a 6px 8px, transparent 8px) 0 30px / 10px 40px no-repeat #adadad;
  color: #fff;
  font-size: 18px;
  font-weight: 700;
}

.model .down {
  color: #fff;
}

.group {
  display: flex;
  flex-direction: column;
  align-items: center;
  margin: 8px 0;
  border-right: 2px solid #bdbdbd;
}

.group:last-child {
  border-right: 0;
}

.tools {
  display: flex;
  gap: 6px;
}

.tool {
  display: flex;
  justify-content: center;
  width: 66px;
  height: 65px;
  padding: 7px 0 0 2px;
}

.tool svg {
  width: 48px;
  height: 48px;
  overflow: visible;
}

.selected {
  background: #5487b5;
}

.menu {
  display: flex;
  align-items: center;
  gap: 3px;
  line-height: 22px;
  white-space: nowrap;
}

.stop-sketch {
  margin-right: 18px;
}

/* floating panels */
.panels {
  position: relative;
  display: grid;
  flex: 1;
  grid-template-columns: 1fr auto 1fr;
  padding-top: 7px;
}

.left {
  display: flex;
  flex-direction: column;
  justify-content: space-between;
  width: 596px;
}

.panel-head,
.palette-head {
  display: flex;
  align-items: center;
  height: 41px;
  padding: 0 1px 0 6px;
  border: 2px solid #a9a9a9;
  background: #d1d1d1;
}

.panel-head h2 {
  margin-left: 20px;
  font-size: 18px;
}

.panel-head .indent {
  margin-left: 36px;
}

.round {
  width: 16px;
  height: 16px;
}

.round svg {
  display: block;
}

.grip {
  width: 5px;
  height: 20px;
  margin-left: 12px;
  border: solid #777;
  border-width: 0 1px;
}

.tree {
  margin: 9px 0 0;
  padding: 0;
  list-style: none;
}

.node {
  display: flex;
  height: 33px;
  margin: 0 0 7px 30px;
}

.child {
  margin-left: 60px;
}

.toggle {
  width: 14px;
  margin-right: 16px;
}

.toggle svg {
  width: 14px;
  height: 16px;
  fill: #f4f4f4;
  stroke: #222;
  stroke-width: 1.5;
}

.pill {
  display: flex;
  align-items: center;
  padding-right: 14px;
  background: #cccccc;
}

.pill b {
  align-self: stretch;
  width: 8px;
}

.pill svg {
  width: 28px;
  height: 28px;
  margin: 0 9px 0 4px;
  color: #5e5e5e;
}

.pill span {
  margin-left: 15px;
}

.pill .lit {
  color: #fdf0a6;
}

.pill .off {
  color: #9cc3ee;
}

.violet {
  background: #8f8fff;
}

.lime {
  background: #cdf283;
}

.orange {
  background: #f7a673;
}

.azure {
  background: #6f92ea;
}

.current {
  border: solid #b2b2b2;
  border-width: 3px 0 3px 3px;
  background: #818181;
  color: #fff;
  font-weight: 700;
}

.pill.current b {
  width: 5px;
}

.activate {
  display: flex;
  align-items: center;
  padding: 0 13px 0 8px;
  background: #cccccc;
}

.activate input {
  appearance: none;
  width: 22px;
  height: 22px;
  margin: 0;
  border: 1px solid #444;
  border-radius: 50%;
  background: radial-gradient(circle, #222 0 4px, #c5cad5 5px 8px, #f4f4f4 9px);
}

.navbars {
  display: flex;
  align-items: flex-end;
  gap: 12px;
}

.navbar {
  display: flex;
  align-items: center;
  height: 40px;
  padding-left: 4px;
  background: #cacaca;
}

.navbar .flat svg {
  width: 28px;
  height: 28px;
  margin: 0 1px;
}

.navbar .wide svg {
  margin-left: 14px;
}

.navbar .drop svg {
  width: 15px;
  height: 11px;
  margin: 0 4px 0 2px;
}

.view .drop svg {
  margin-left: 6px;
}

.navbar .drop:last-child svg {
  margin-right: 2px;
}

.right {
  display: flex;
  flex-direction: column;
  align-items: flex-end;
}

.viewcube {
  width: 180px;
  height: 150px;
  margin: 5px 0 45px;
}

.face {
  fill: #8b8f95;
  font-family: Roboto, sans-serif;
  font-size: 20px;
  font-weight: 700;
  text-anchor: middle;
}

.axis {
  font-size: 24px;
  font-weight: 700;
  text-anchor: middle;
}

.z {
  fill: #8482fb;
}

.x {
  fill: #f98c8c;
}

/* sketch palette */
.palette {
  display: flex;
  flex: 1;
  flex-direction: column;
  width: 416px;
  border: 2px solid #a9a9a9;
  border-top: 0;
  border-radius: 3px;
  background: #dddddd;
}

.palette-head {
  gap: 10px;
  border-width: 2px 0;
  padding: 0 6px 0 1px;
}

.palette-head .grip {
  margin: 0 1px 0 0;
}

.palette-body {
  display: flex;
  flex: 1;
  padding-right: 3px;
}

.rows {
  display: flex;
  flex: 1;
  flex-direction: column;
  margin-bottom: -4px;
}

.rows h3 {
  display: flex;
  flex: 1;
  align-items: center;
  gap: 7px;
  padding-left: 3px;
}

.row {
  position: relative;
  display: flex;
  flex: 1;
  align-items: center;
  padding-left: 16px;
}

.row span,
.row label {
  width: 192px;
}

.row button {
  width: 37px;
  height: 37px;
}

.row button svg {
  display: block;
  width: 26px;
  height: 26px;
  margin: auto;
}

.row .hover {
  background: #adadad;
}

.row input {
  appearance: none;
  position: relative;
  width: 22px;
  height: 22px;
  margin: 0 6px;
  border: 2px solid #3a3a3a;
  border-radius: 5px;
  background: linear-gradient(#f4f4f4, #b9b9b9);
}

.row input:checked {
  background: linear-gradient(#b4b4b4, #f0f0f0);
}

.row input:checked::after {
  content: "";
  position: absolute;
  top: 0;
  left: 6px;
  width: 7px;
  height: 14px;
  border: solid #000;
  border-width: 0 2px 2px 0;
  transform: rotate(38deg);
}

.tooltip {
  position: absolute;
  z-index: 1;
  top: 48px;
  left: 141px;
  width: 170px;
  border-radius: 20px;
  background: #4f4f4f;
  box-shadow: 0 6px 20px rgba(0, 0, 0, 0.3);
  color: #fff;
  font-family: Inter, sans-serif;
  font-size: 22px;
  font-weight: 600;
  line-height: 40px;
  text-align: center;
}

.scroll {
  width: 10px;
  background: #b9babc;
}

.thumb {
  height: 91%;
  border: 1px solid #7d7d7d;
  border-radius: 5px;
  background: #929292;
}

.palette-foot {
  position: relative;
  display: flex;
  justify-content: flex-end;
  align-items: center;
  height: 60px;
  padding-right: 16px;
  border-top: 2px solid #a9a9a9;
  background: #d1d1d1;
}

.stop {
  width: 127px;
  height: 36px;
  border: 2px solid #b5b5b5;
  background: #e9e9e9;
  color: #606060;
  font-size: 20px;
}

/* timeline */
.timeline {
  display: flex;
  height: 84px;
  padding: 0 6px 0 17px;
  background: #cccccc;
}

.player {
  display: flex;
  gap: 20px;
  height: 70px;
}

.player svg {
  width: 22px;
  height: 26px;
  fill: #555;
}

.history {
  position: relative;
  display: flex;
  flex: 1;
  gap: 7px;
  padding: 11px 0 0 33px;
}

.seg {
  display: flex;
  gap: 13px;
  height: 42px;
  padding: 12px 3px 0;
}

.seg.split,
.seg.violet,
.seg.orange,
.seg.azure {
  background: linear-gradient(#8f8fff, #8f8fff) 0 0 / 100% 6px no-repeat;
}

.seg.split {
  background-image: linear-gradient(90deg, #8f8fff 50%, #cdf283 50%);
}

.seg.orange {
  background-image: linear-gradient(#f7a673, #f7a673);
}

.seg.azure {
  background-image: linear-gradient(#5f88e2, #5f88e2);
}

.seg svg {
  width: 27px;
  height: 28px;
}

.track {
  position: absolute;
  top: 56px;
  left: 39px;
  display: flex;
  align-items: flex-start;
  height: 18px;
}

.track span {
  width: 40px;
  height: 11px;
  border: solid #666;
  border-width: 0 3px 3px 0;
}

.track .expand + span {
  width: 35px;
}

.expand {
  width: 17px;
  height: 18px;
  border: 2px solid #8a8f9b;
  border-radius: 4px;
  background: #e0e3ea;
  color: #111;
  font-size: 18px;
  font-weight: 700;
  line-height: 12px;
}

.playhead {
  position: absolute;
  top: 14px;
  left: 540px;
  width: 20px;
  height: 54px;
}

.settings {
  height: 68px;
  color: #5e5e5e;
}

.settings svg {
  width: 28px;
  height: 28px;
}
```
